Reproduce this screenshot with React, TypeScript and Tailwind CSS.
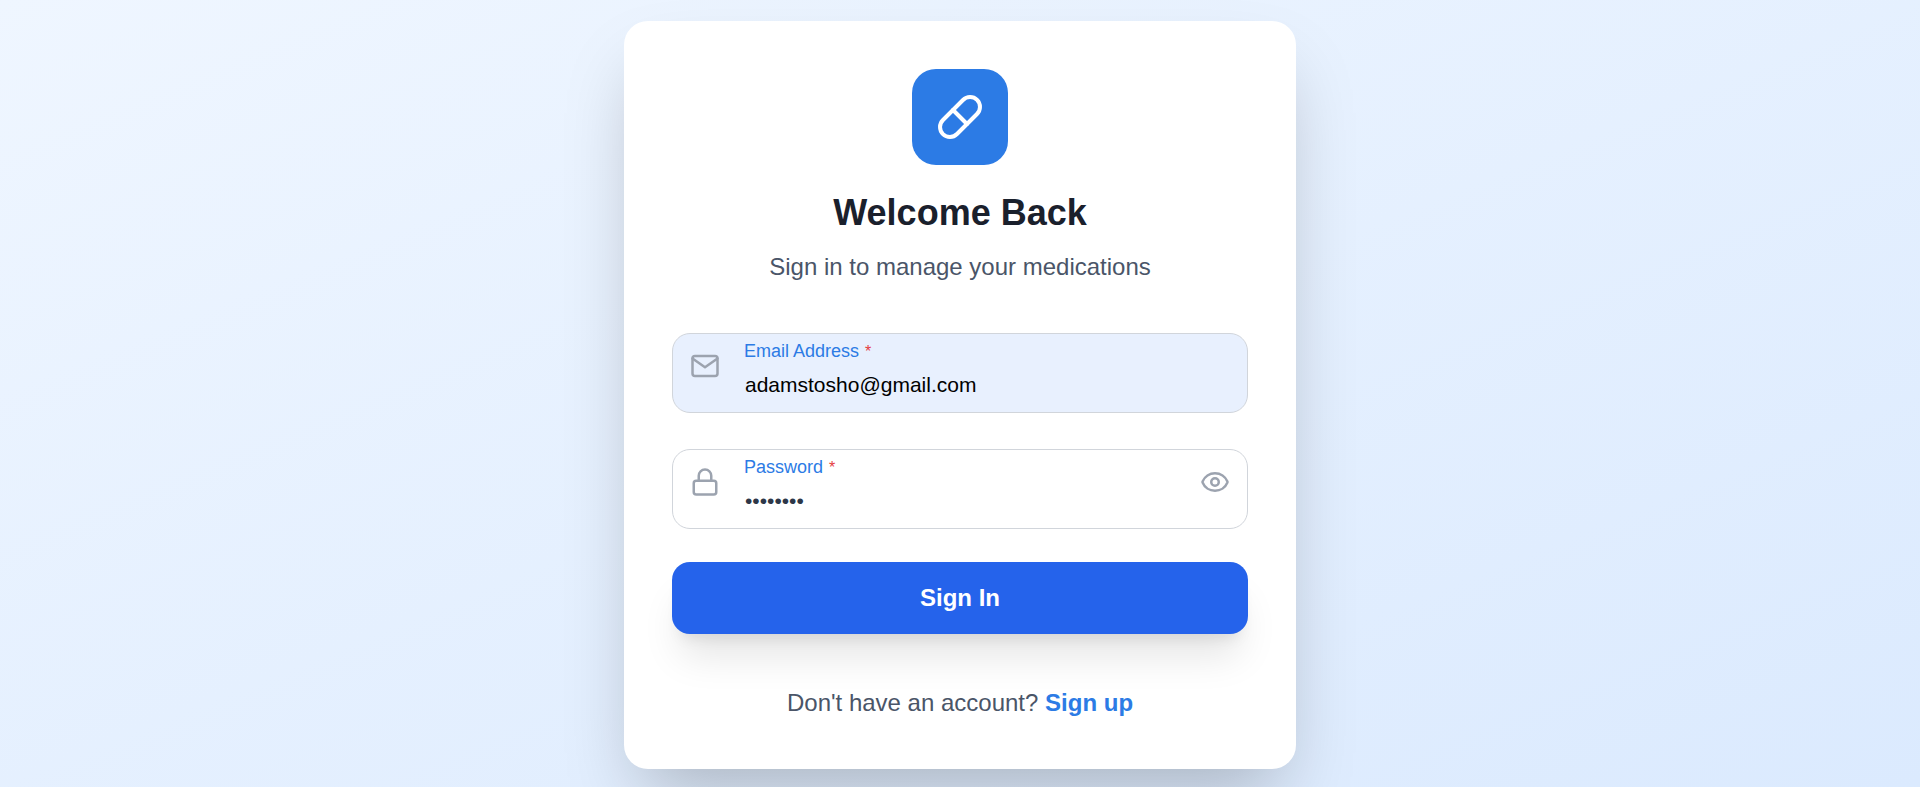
import { useState, type ReactNode } from "react";
import { Eye, Lock, Pill } from "lucide-react";

function MailIcon() {
  return (
    <svg
      width="30"
      height="30"
      viewBox="0 0 24 24"
      fill="none"
      stroke="currentColor"
      strokeWidth="2"
      strokeLinecap="round"
      strokeLinejoin="round"
      aria-hidden="true"
    >
      <rect x="2" y="4" width="20" height="16" rx="2" />
      <path d="M22 6l-10 7L2 6" />
    </svg>
  );
}

type FieldProps = {
  id: string;
  label: string;
  type: string;
  value: string;
  onChange: (value: string) => void;
  icon: ReactNode;
  inputClass: string;
  action?: ReactNode;
};

function Field({ id, label, type, value, onChange, icon, inputClass, action }: FieldProps) {
  return (
    <div className="relative">
      <span className="pointer-events-none absolute left-[18px] top-[18px] text-[#9ca3af]">{icon}</span>
      <label htmlFor={id} className="absolute left-[72px] top-[5px] text-lg leading-[27px] text-[#2c7be5]">
        {label}
        <span className="ml-1.5 text-base leading-none text-[#e53e3e]">*</span>
      </label>
      <input
        id={id}
        type={type}
        value={value}
        required
        onChange={(e) => onChange(e.target.value)}
        className={`block h-20 w-full rounded-[18px] border border-[#d1d5db] pl-[72px] pr-16 pt-6 text-[21px] outline-none ${inputClass}`}
      />
      {action}
    </div>
  );
}

export default function App() {
  const [email, setEmail] = useState("adamstosho@gmail.com");
  const [password, setPassword] = useState("password");
  const [visible, setVisible] = useState(false);

  return (
    <main className="flex min-h-screen flex-col items-center bg-linear-to-br from-[#eff6ff] to-[#dbeafe] px-4 pt-[21px] pb-[18px] font-['Liberation_Sans',Arial,sans-serif]">
      <section className="w-full max-w-2xl rounded-3xl bg-white p-12 shadow-[0_38px_75px_-18px_rgba(0,0,0,0.25)]">
        <header className="flex flex-col items-center text-center">
          <div className="flex size-24 items-center justify-center rounded-3xl bg-[#2c7be5] text-white">
            <Pill size={48} />
          </div>
          <h1 className="mt-6 text-4xl leading-[48px] font-bold text-[#1a202c]">Welcome Back</h1>
          <p className="mt-3 text-2xl leading-9 text-[#4a5568]">Sign in to manage your medications</p>
        </header>

        <form className="mt-12 flex flex-col" onSubmit={(e) => e.preventDefault()}>
          <div className="flex flex-col gap-9">
            <Field
              id="email"
              label="Email Address"
              type="email"
              value={email}
              onChange={setEmail}
              icon={<MailIcon />}
              inputClass="bg-[#e8f0fe] text-black"
            />
            <Field
              id="password"
              label="Password"
              type={visible ? "text" : "password"}
              value={password}
              onChange={setPassword}
              icon={<Lock size={30} />}
              inputClass="bg-white text-[#2d3748]"
              action={
                <button
                  type="button"
                  aria-label="Show password"
                  onClick={() => setVisible(!visible)}
                  className="absolute right-[18px] top-[18px] text-[#9ca3af]"
                >
                  <Eye size={30} />
                </button>
              }
            />
          </div>
          <button
            type="submit"
            className="mt-[33px] h-[72px] rounded-[18px] bg-[#2563eb] text-2xl font-bold text-white shadow-[0_30px_38px_-8px_rgba(0,0,0,0.1),0_12px_15px_-9px_rgba(0,0,0,0.1)]"
          >
            Sign In
          </button>
        </form>

        <p className="mt-[51px] text-center text-2xl leading-9 text-[#4a5568]">
          Don't have an account?{" "}
          <a href="#signup" className="font-bold text-[#2c7be5]">
            Sign up
          </a>
        </p>
      </section>
    </main>
  );
}
